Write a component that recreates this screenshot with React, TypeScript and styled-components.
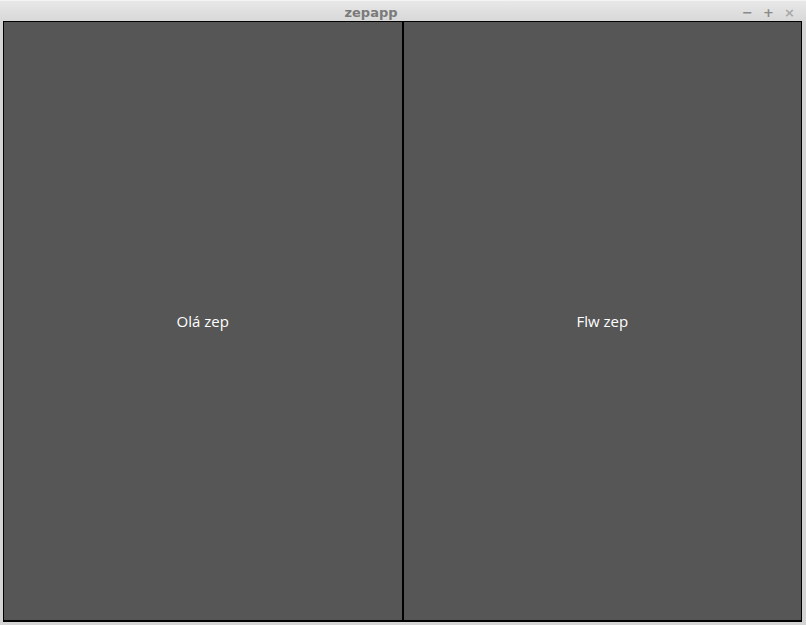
import React from "react";
import styled, { createGlobalStyle } from "styled-components";

const Global = createGlobalStyle`
  html, body { margin: 0; padding: 0; background: #d6d6d6; }
  body { width: 806px; height: 625px; overflow: hidden; }
`;

const Window = styled.div`
  width: 806px;
  height: 625px;
  display: flex;
  flex-direction: column;
  background: #d4d4d4;
  box-sizing: border-box;
`;

const TitleBar = styled.div`
  height: 21px;
  flex: none;
  position: relative;
  display: flex;
  align-items: center;
  justify-content: center;
  padding-top: 2px;
  background: linear-gradient(#e8e8e8, #d8d8d8);
  border-top: 1px solid #f4f4f4;
  box-sizing: border-box;
`;

const Title = styled.span`
  font-family: "DejaVu Sans", sans-serif;
  font-weight: bold;
  font-size: 13px;
  color: #7a7a7a;
  margin-left: -64px;
`;

const Controls = styled.div`
  position: absolute;
  right: 10px;
  top: 4px;
  display: flex;
  gap: 8px;
  font-family: "DejaVu Sans", sans-serif;
  font-weight: bold;
  font-size: 13px;
  line-height: 16px;
`;

const Ctl = styled.span<{ $light?: boolean }>`
  width: 13px;
  text-align: center;
  color: ${(p) => (p.$light ? "#a8a8a8" : "#8a8a8a")};
`;

const Frame = styled.div`
  flex: 1;
  display: flex;
  padding: 0 4px 3px 3px;
  min-height: 0;
`;

const Body = styled.div`
  flex: 1;
  display: flex;
  border: 1px solid #000;
  border-bottom-width: 2px;
  background: #000;
  gap: 2px;
`;

const Pane = styled.div`
  flex: 1;
  display: flex;
  align-items: center;
  justify-content: center;
  background: #565656;
  color: #ffffff;
  font-family: "Open Sans", "Noto Sans", sans-serif;
  font-size: 15px;
  padding-bottom: 1px;
`;

export default function App() {
  return (
    <>
      <Global />
      <Window>
        <TitleBar>
          <Title>zepapp</Title>
          <Controls>
            <Ctl>−</Ctl>
            <Ctl>+</Ctl>
            <Ctl $light>×</Ctl>
          </Controls>
        </TitleBar>
        <Frame>
          <Body>
            <Pane>Olá zep</Pane>
            <Pane>Flw zep</Pane>
          </Body>
        </Frame>
      </Window>
    </>
  );
}
